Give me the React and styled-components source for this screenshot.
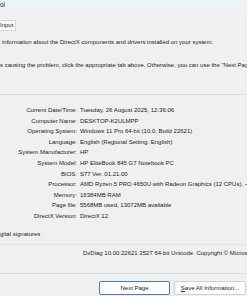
import styled, { createGlobalStyle } from "styled-components";

const GlobalStyle = createGlobalStyle`
  html, body {
    margin: 0;
    padding: 0;
    background: #f0f0f0;
    overflow: hidden;
  }
  body {
    font-family: "Liberation Sans", Arial, sans-serif;
    color: #222;
  }
`;

const Window = styled.div`
  width: 247px;
  height: 296px;
  background: #f0f0f0;
  font-size: 6px;
  overflow: hidden;
`;

const TitleBar = styled.div`
  height: 10px;
  line-height: 9px;
  background: #eef3f8;
  white-space: nowrap;
  font-size: 6.3px;
`;

const Tabs = styled.div`
  display: flex;
  margin-top: 10px;
`;

const Tab = styled.div`
  height: 9px;
  line-height: 9px;
  padding: 0 2px 0 0;
  background: #fbfbfb;
  border: 1px solid #dadada;
  border-left: none;
`;

const Intro = styled.div`
  margin-top: ${(props) => props.top}px;
  padding-left: ${(props) => props.indent || 0}px;
  line-height: 8px;
  white-space: nowrap;
  overflow: hidden;
`;

const Divider = styled.div`
  margin-top: ${(props) => props.top}px;
  height: 1px;
  background: ${(props) => props.color || "#dcdcdc"};
`;

const InfoGrid = styled.div`
  margin-top: 9.7px;
  display: grid;
  grid-template-columns: 77px 1fr;
  column-gap: 3px;
  grid-auto-rows: 10.6px;
  align-items: center;
  white-space: nowrap;
`;

const Label = styled.div`
  text-align: right;
`;

const Value = styled.div`
  overflow: hidden;
`;

const Version = styled.div`
  margin-top: 4px;
  padding-left: 83px;
  line-height: 8px;
  white-space: nowrap;
  overflow: hidden;
`;

const ButtonRow = styled.div`
  margin-top: 7px;
  padding-left: 99px;
  display: flex;
  gap: 4px;
`;

const Button = styled.div`
  box-sizing: border-box;
  width: ${(props) => props.width}px;
  height: 14px;
  line-height: 12px;
  text-align: center;
  background: #fdfdfd;
  border: 1px solid ${(props) => (props.primary ? "#3b7fd0" : "#d0d0d0")};
  border-radius: 2px;
  white-space: nowrap;
  flex-shrink: 0;
`;

const rows = [
  ["Current Date/Time:", "Tuesday, 26 August 2025, 12:36:06"],
  ["Computer Name:", "DESKTOP-K2ULMPP"],
  ["Operating System:", "Windows 11 Pro 64-bit (10.0, Build 22621)"],
  ["Language:", "English (Regional Setting: English)"],
  ["System Manufacturer:", "HP"],
  ["System Model:", "HP EliteBook 845 G7 Notebook PC"],
  ["BIOS:", "S77 Ver. 01.21.00"],
  ["Processor:", "AMD Ryzen 5 PRO 4650U with Radeon Graphics (12 CPUs), ~2.1GHz"],
  ["Memory:", "16384MB RAM"],
  ["Page file:", "5568MB used, 13072MB available"],
  ["DirectX Version:", "DirectX 12"],
];

export default function App() {
  return (
    <Window>
      <GlobalStyle />
      <TitleBar>ol</TitleBar>
      <Tabs>
        <Tab>Input</Tab>
      </Tabs>
      <Intro top={7} indent={2}>
        information about the DirectX components and drivers installed on your system.
      </Intro>
      <Intro top={15}>
        s causing the problem, click the appropriate tab above. Otherwise, you can use the "Next Page" button below to visit each page in sequence.
      </Intro>
      <Divider top={25} />
      <InfoGrid>
        {rows.map(([label, value]) => (
          <>
            <Label key={label}>{label}</Label>
            <Value>{value}</Value>
          </>
        ))}
      </InfoGrid>
      <Intro top={8.7}>gital signatures</Intro>
      <Divider top={6} color="#e6e6e6" />
      <Version>DxDiag 10.00.22621.3527 64-bit Unicode&nbsp; Copyright © Microsoft. All rights reserved.</Version>
      <Divider top={16} />
      <ButtonRow>
        <Button primary width={71}>Next Page</Button>
        <Button width={72}>
          <u>S</u>ave All Information...
        </Button>
      </ButtonRow>
    </Window>
  );
}
